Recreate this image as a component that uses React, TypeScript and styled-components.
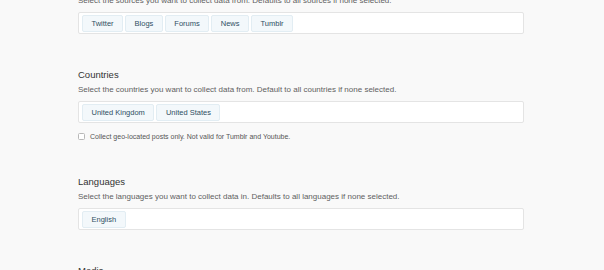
import styled, { createGlobalStyle } from "styled-components";

const GlobalStyle = createGlobalStyle`
  html, body {
    margin: 0;
    padding: 0;
    background: #f9f9f9;
    overflow: hidden;
  }
  body {
    font-family: "Liberation Sans", Arial, Helvetica, sans-serif;
    color: #333;
  }
`;

type SectionType = {
  title: string;
  description: string;
  tags: string[];
  note?: string;
};

const sections: SectionType[] = [
  {
    title: "Sources",
    description: "Select the sources you want to collect data from. Defaults to all sources if none selected.",
    tags: ["Twitter", "Blogs", "Forums", "News", "Tumblr"],
  },
  {
    title: "Countries",
    description: "Select the countries you want to collect data from. Default to all countries if none selected.",
    tags: ["United Kingdom", "United States"],
    note: "Collect geo-located posts only. Not valid for Tumblr and Youtube.",
  },
  {
    title: "Languages",
    description: "Select the languages you want to collect data in. Defaults to all languages if none selected.",
    tags: ["English"],
  },
  {
    title: "Media",
    description: "Select the media types you want to collect.",
    tags: [],
  },
];

const App = () => {
  return (
    <>
      <GlobalStyle />
      <Form>
        {sections.map((section) => (
          <Section key={section.title}>
            <Title>{section.title}</Title>
            <Description>{section.description}</Description>
            <TagBox>
              {section.tags.map((tag) => (
                <Tag key={tag}>{tag}</Tag>
              ))}
            </TagBox>
            {section.note ? (
              <CheckRow>
                <Checkbox type='checkbox' />
                <CheckLabel>{section.note}</CheckLabel>
              </CheckRow>
            ) : (
              ""
            )}
          </Section>
        ))}
      </Form>
    </>
  );
};

export default App;

const Form = styled.div`
  display: flex;
  flex-direction: column;
  gap: 35px;
  width: 446px;
  margin: -20px 0 0 78px;
`;

const Section = styled.section`
  display: flex;
  flex-direction: column;
`;

const Title = styled.h4`
  margin: 0 0 4px;
  font-size: 9.5px;
  line-height: 12px;
  font-weight: 400;
  color: #333;
`;

const Description = styled.p`
  margin: 0 0 6px;
  font-size: 8px;
  line-height: 10px;
  color: #5f5f5f;
  white-space: nowrap;
`;

const TagBox = styled.div`
  display: flex;
  gap: 2px;
  min-height: 17px;
  padding: 2px 3px 1px;
  background: #fff;
  border: 1px solid #e4e4e4;
  border-radius: 2px;
`;

const Tag = styled.span`
  display: flex;
  align-items: center;
  height: 17px;
  box-sizing: border-box;
  padding: 0 8.5px;
  font-size: 7.5px;
  color: #2f4f63;
  background: #f3f8fb;
  border: 1px solid #e2edf3;
  border-radius: 2px;
`;

const CheckRow = styled.label`
  display: flex;
  align-items: center;
  gap: 5px;
  height: 10px;
  margin-top: 8px;
`;

const Checkbox = styled.input`
  appearance: none;
  width: 7px;
  height: 7px;
  margin: 0;
  background: #fff;
  border: 1px solid #b8b8b8;
  border-radius: 1.5px;
`;

const CheckLabel = styled.span`
  font-size: 7px;
  color: #555;
`;
